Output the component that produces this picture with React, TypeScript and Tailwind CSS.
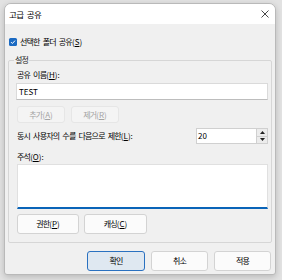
import React from "react";

const font = { fontFamily: '"Noto Sans CJK KR", "Noto Sans", sans-serif' };

function U({ c }: { c: string }) {
  return (
    <span className="tracking-[0px]">
      (<span className="underline underline-offset-[1px]">{c}</span>)
    </span>
  );
}

export default function App() {
  return (
    <div
      className="w-[282px] h-[280px] bg-[#e2e2e2] pt-[3px] pl-[4px] text-[8px] leading-[12px] text-black tracking-[-0.8px] [word-spacing:2px]"
      style={font}
    >
      <div className="w-[272px] h-[272px] rounded-t-[7px] rounded-b-[3px] border border-[#b9b9b9] bg-[#f0f0f0] overflow-hidden flex flex-col shadow-[0_2px_6px_rgba(0,0,0,0.18)]">
        {/* title bar */}
        <div className="h-[20px] bg-white flex items-center justify-between pl-[4px] pr-[5px]">
          <span className="text-[8.5px] tracking-[-0.6px]">고급 공유</span>
          <svg width="8" height="8" viewBox="0 0 8 8" className="mr-[1px]">
            <path d="M0.5 0.5 L7.5 7.5 M7.5 0.5 L0.5 7.5" stroke="#333" strokeWidth="0.9" />
          </svg>
        </div>
        {/* body */}
        <div className="flex flex-col">
          <div className="mt-[12px] h-[12px] pl-[4px] flex items-center gap-[3px]">
            <div className="w-[8px] h-[8px] rounded-[1.5px] bg-[#1b6ac2] flex items-center justify-center">
              <svg width="6" height="6" viewBox="0 0 6 6">
                <path d="M1 3.1 L2.4 4.5 L5 1.6" stroke="white" strokeWidth="1" fill="none" />
              </svg>
            </div>
            <span>
              선택한 폴더 공유<U c="S" />
            </span>
          </div>

          <fieldset className="mt-[6px] ml-[3px] w-[264px] border border-[#d6d6d6] rounded-[2px] p-0 m-0 min-w-0">
            <legend className="ml-[5px] px-[1px] h-[12px] leading-[12px] text-[#222]">설정</legend>
            <div className="pl-[7px] pr-[3px] pb-[8px] flex flex-col">
              <div className="mt-[3px] ml-[1px] h-[12px]">
                공유 이름<U c="H" />:
              </div>
              <div className="mt-[2px] h-[17px] bg-white border border-[#dadada] border-b-[#bdbdbd] flex items-center pl-[2px] text-[8px] tracking-[0px]">
                TEST
              </div>
              <div className="mt-[6px] ml-[1px] flex gap-[6px]">
                <div className="w-[48px] h-[17px] bg-[#f4f4f4] border border-[#e6e6e6] rounded-[3px] flex items-center justify-center text-[#a3a3a3]">
                  추가<U c="A" />
                </div>
                <div className="w-[48px] h-[17px] bg-[#f4f4f4] border border-[#e6e6e6] rounded-[3px] flex items-center justify-center text-[#a3a3a3]">
                  제거<U c="R" />
                </div>
              </div>
              <div className="mt-[5px] h-[16px] flex items-center justify-between">
                <span className="ml-[1px]">
                  동시 사용자의 수를 다음으로 제한<U c="L" />:
                </span>
                <div className="w-[72px] h-[16px] flex border border-[#d0d0d0] bg-white">
                  <div className="flex-1 flex items-center pl-[1px] tracking-[0px]">20</div>
                  <div className="w-[11px] flex flex-col bg-[#ececec] border-l border-[#d0d0d0]">
                    <div className="flex-1 flex items-center justify-center border-b border-[#d0d0d0]">
                      <svg width="5" height="3" viewBox="0 0 5 3">
                        <path d="M0 3 L2.5 0 L5 3 Z" fill="#222" />
                      </svg>
                    </div>
                    <div className="flex-1 flex items-center justify-center">
                      <svg width="5" height="3" viewBox="0 0 5 3">
                        <path d="M0 0 L2.5 3 L5 0 Z" fill="#222" />
                      </svg>
                    </div>
                  </div>
                </div>
              </div>
              <div className="mt-[7px] ml-[1px] h-[12px]">
                주석<U c="O" />:
              </div>
              <div className="mt-[1px] ml-[1px] h-[45px] bg-white border border-[#e0e0e0] border-b-2 border-b-[#0a64b8]" />
              <div className="mt-[5px] ml-[1px] flex gap-[5px]">
                <div className="w-[62px] h-[20px] bg-[#fbfbfb] border border-[#d3d3d3] rounded-[3px] flex items-center justify-center">
                  권한<U c="P" />
                </div>
                <div className="w-[63px] h-[20px] bg-[#fbfbfb] border border-[#d3d3d3] rounded-[3px] flex items-center justify-center">
                  캐싱<U c="C" />
                </div>
              </div>
            </div>
          </fieldset>

          <div className="mt-[8px] pr-[4px] flex justify-end gap-[6px]">
            <div className="w-[58px] h-[20px] bg-[#dfe8f1] border border-[#2a71c0] rounded-[3px] flex items-center justify-center">
              확인
            </div>
            <div className="w-[57px] h-[20px] bg-[#fbfbfb] border border-[#d3d3d3] rounded-[3px] flex items-center justify-center">
              취소
            </div>
            <div className="w-[57px] h-[20px] bg-[#fbfbfb] border border-[#d3d3d3] rounded-[3px] flex items-center justify-center">
              적용
            </div>
          </div>
        </div>
      </div>
    </div>
  );
}
